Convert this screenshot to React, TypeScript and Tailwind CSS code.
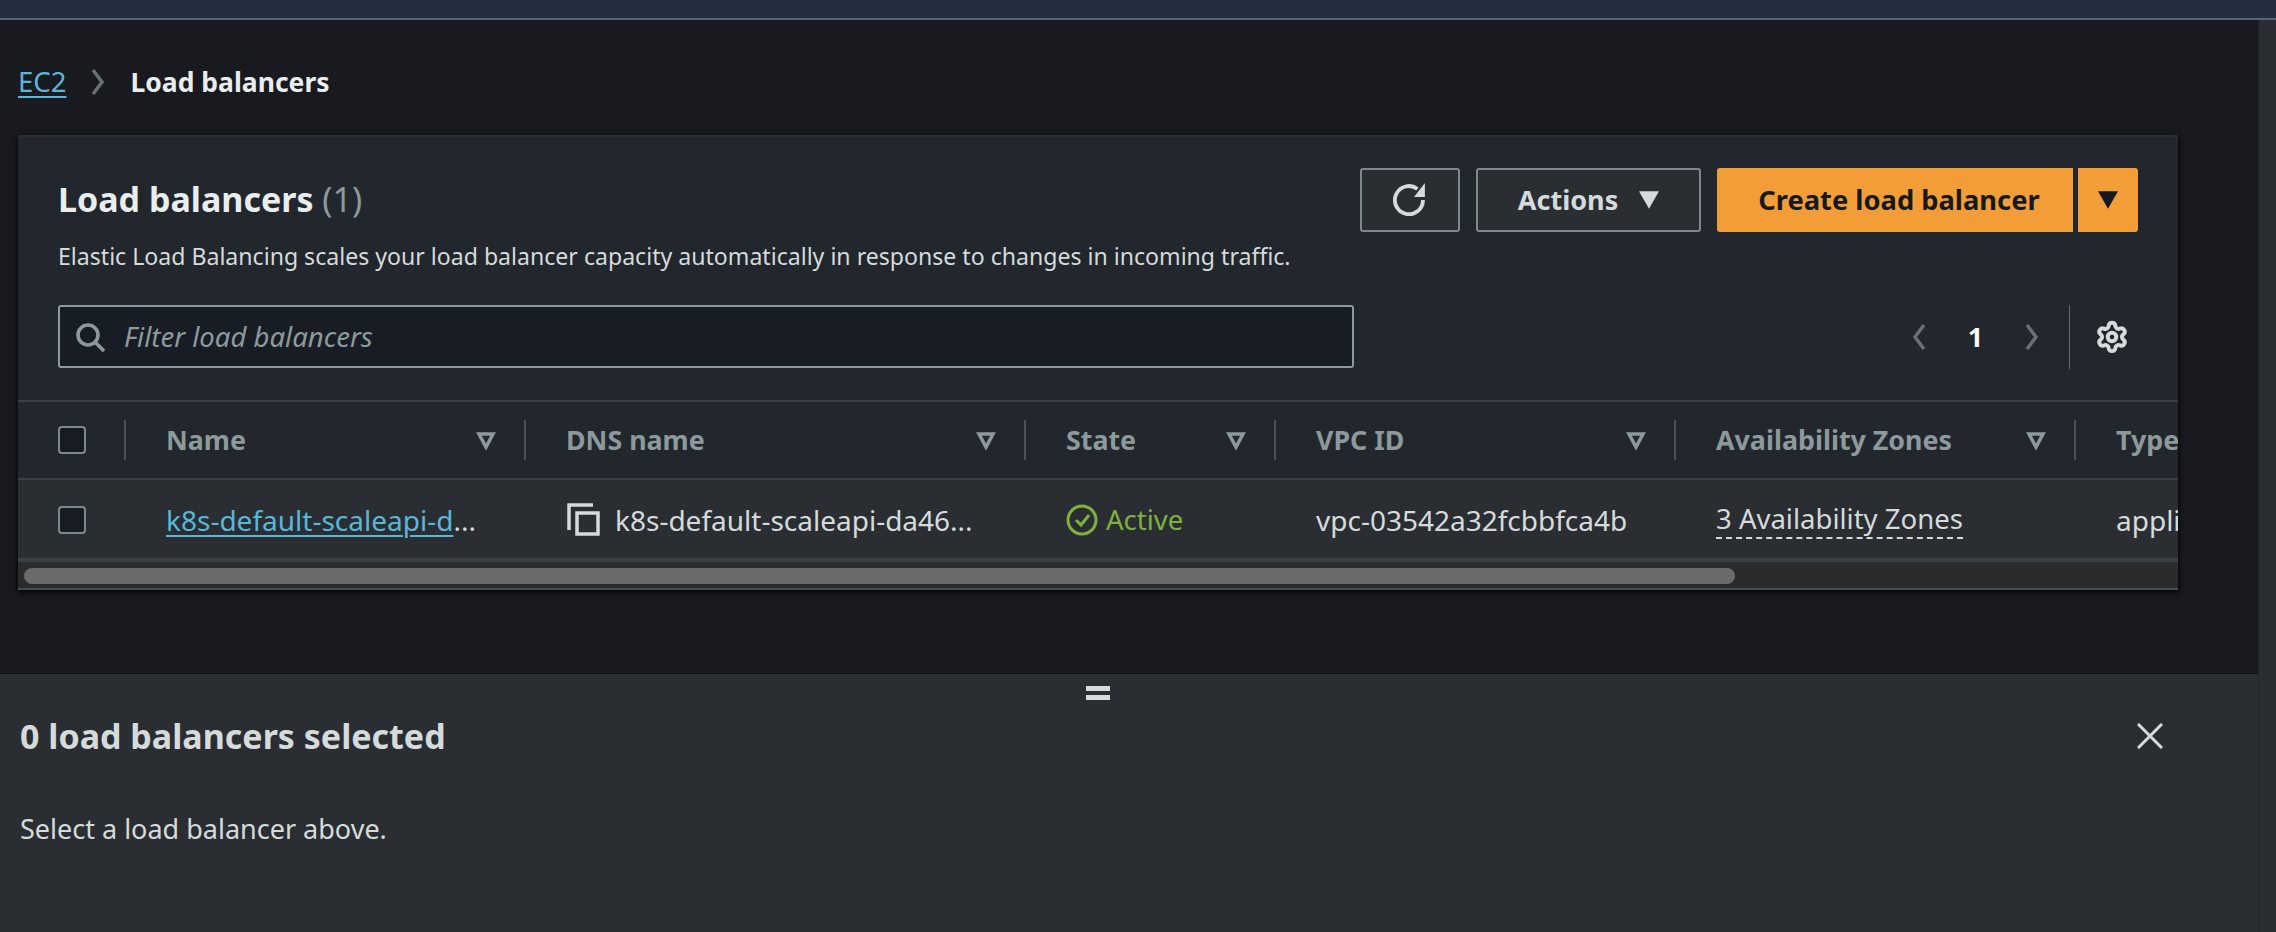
import { Settings } from "lucide-react";

const font = "font-['Noto_Sans',sans-serif]";

function SortIcon() {
  return (
    <svg viewBox="0 0 24 24" className="h-[24px] w-[24px] shrink-0 text-[#8d9a9b]" fill="none" stroke="currentColor" strokeWidth="3.5">
      <path d="M5 6h14l-7 13z" />
    </svg>
  );
}

function Caret({ color }: { color: string }) {
  return (
    <svg viewBox="0 0 16 16" className="h-[20px] w-[20px] shrink-0" fill={color}>
      <path d="M0 1h16L8 15z" />
    </svg>
  );
}

function Chevron({ left }: { left?: boolean }) {
  return (
    <svg viewBox="0 0 16 26" className="h-[26px] w-[16px] shrink-0 text-[#687078]" fill="none" stroke="currentColor" strokeWidth="3.5">
      <path d={left ? "M13 1 4 13l9 12" : "M3 1l9 12-9 12"} />
    </svg>
  );
}

function Checkbox() {
  return <div className="h-[28px] w-[28px] shrink-0 rounded-[4px] border-2 border-[#7d8a8b] bg-[#181c24]" />;
}

const columns = [
  { label: "Name", width: "w-[400px]" },
  { label: "DNS name", width: "w-[500px]" },
  { label: "State", width: "w-[250px]" },
  { label: "VPC ID", width: "w-[400px]" },
  { label: "Availability Zones", width: "w-[400px]" },
];

export default function App() {
  return (
    <div className={`flex h-[932px] w-[2276px] flex-col overflow-hidden bg-[#181a1f] ${font}`}>
      {/* Console top bar */}
      <div className="h-[20px] shrink-0 border-b-2 border-[#59646b] bg-[#232f3e]" />

      <div className="flex min-h-0 flex-1">
        <div className="flex w-[2258px] flex-col">
          <div className="h-[653px] shrink-0 pl-[18px]">
            {/* Breadcrumb */}
            <div className="flex h-[115px] items-center pt-[8px] leading-[30px]">
              <a className="text-[27.5px] text-[#5bb6d8] underline decoration-2 underline-offset-4">EC2</a>
              <span className="ml-[24px] mr-[24px]">
                <Chevron />
              </span>
              <span className="text-[26.5px] font-bold text-[#eaeded]">Load balancers</span>
            </div>

            {/* Table card */}
            <div className="w-[2160px] overflow-hidden border-t-2 border-[#2a2e33] bg-[#22262d] shadow-[0_2px_6px_#000]">
              <div className="flex h-[265px] flex-col border-b-2 border-[#3a3f48] px-[40px] pt-[31px]">
                <div className="flex justify-between">
                  <div className="pt-[11px]">
                    <h1 className="text-[34px] font-bold leading-[40px] text-[#eaeded]">
                      Load balancers <span className="font-normal text-[#8d9a9b]">(1)</span>
                    </h1>
                    <p className="mt-[22px] text-[23.1px] leading-[30px] text-[#d5dbdb]">
                      Elastic Load Balancing scales your load balancer capacity automatically in response to changes in incoming traffic.
                    </p>
                  </div>
                  <div className="flex h-[64px] gap-[16px]">
                    <button className="flex w-[100px] items-center justify-center rounded-[3px] border-2 border-[#7d8a8b] bg-[#2a2e33] text-[#d5dbdb]">
                      <svg viewBox="0 0 16 16" className="h-[34px] w-[34px]" fill="none" stroke="currentColor" strokeWidth="1.8">
                        <path d="M11.5 2.8A6.6 6.6 0 1 0 14.1 8" />
                        <path d="M15 0v6.6H9.9z" fill="currentColor" stroke="none" />
                      </svg>
                    </button>
                    <button className="flex w-[225px] items-center justify-center gap-[21px] rounded-[3px] border-2 border-[#7d8a8b] bg-[#2a2e33] text-[27px] font-bold text-[#d5dbdb]">
                      Actions <Caret color="#d5dbdb" />
                    </button>
                    <div className="flex gap-[5px]">
                      <button className="w-[356px] rounded-l-[3px] bg-[#f29d38] pl-[8px] text-[27.3px] font-bold text-[#16191f]">
                        Create load balancer
                      </button>
                      <button className="flex w-[60px] items-center justify-center rounded-r-[3px] bg-[#f29d38]">
                        <Caret color="#16191f" />
                      </button>
                    </div>
                  </div>
                </div>

                {/* Filter and pagination */}
                <div className="mt-[34px] flex h-[64px] items-start justify-between">
                  <div className="flex h-[63px] w-[1296px] items-center gap-[18px] rounded-[3px] border-2 border-[#8d9a9b] bg-[#181c24] pl-[14px] text-[#8d9a9b]">
                    <svg viewBox="0 0 16 16" className="h-[32px] w-[32px] shrink-0" fill="none" stroke="currentColor" strokeWidth="1.8">
                      <circle cx="7" cy="7" r="5" />
                      <path d="m10.7 10.7 4.3 4.3" />
                    </svg>
                    <span className="text-[27.5px] italic">Filter load balancers</span>
                  </div>
                  <div className="flex h-[64px] items-center pr-[9px]">
                    <Chevron left />
                    <span className="mx-[40px] w-[17px] text-center text-[27px] font-bold text-[#fafafa]">1</span>
                    <Chevron />
                    <div className="ml-[29px] h-[64px] w-px bg-[#5f6b7a]" />
                    <Settings className="ml-[25px] h-[34px] w-[34px] text-[#d5dbdb]" strokeWidth={2.8} />
                  </div>
                </div>
              </div>

              {/* Table header */}
              <div className="flex h-[78px] items-center border-b-2 border-[#3a3f48]">
                <div className="flex h-[40px] w-[108px] shrink-0 items-center border-r-2 border-[#4a5058] pl-[40px]">
                  <Checkbox />
                </div>
                {columns.map((col) => (
                  <div key={col.label} className={`flex h-[40px] shrink-0 items-center justify-between border-r-2 border-[#4a5058] pl-[40px] pr-[26px] ${col.width}`}>
                    <span className="text-[26.8px] font-bold text-[#8d9a9b]">{col.label}</span>
                    <SortIcon />
                  </div>
                ))}
                <span className="pl-[40px] text-[26.8px] font-bold text-[#8d9a9b]">Type</span>
              </div>

              {/* Table row */}
              <div className="flex h-[82px] items-center border-b-4 border-[#3a3f48] bg-[#2a2e33] text-[28px] text-[#d5dbdb]">
                <div className="flex w-[107px] shrink-0 pl-[40px] pt-[2px]">
                  <Checkbox />
                </div>
                <div className="flex w-[400px] shrink-0 pl-[41px] pt-[2px]">
                  <a className="text-[#5bb6d8] underline decoration-2 underline-offset-4">k8s-default-scaleapi-d</a>
                  <span>...</span>
                </div>
                <div className="flex w-[500px] shrink-0 items-center gap-[15px] pl-[42px]">
                  <svg viewBox="0 0 33 33" className="h-[33px] w-[33px] shrink-0" fill="none" stroke="currentColor" strokeWidth="3.5">
                    <path d="M2 27V2h24" />
                    <path d="M10 10h21v21H10z" />
                  </svg>
                  <span className="pt-[2px]">k8s-default-scaleapi-da46...</span>
                </div>
                <div className="flex w-[250px] shrink-0 items-center gap-[8px] pl-[41px] pt-[2px] text-[27.5px] text-[#7cb13f]">
                  <svg viewBox="0 0 32 32" className="h-[32px] w-[32px] shrink-0" fill="none" stroke="currentColor" strokeWidth="3">
                    <circle cx="16" cy="16" r="14" />
                    <path d="m10 16 5 5 8-10" />
                  </svg>
                  Active
                </div>
                <div className="w-[400px] shrink-0 pl-[41px] pt-[2px]">vpc-03542a32fcbbfca4b</div>
                <div className="w-[400px] shrink-0 pl-[41px] text-[27.5px]">
                  <span className="border-b-2 border-dashed border-[#d5dbdb]">3 Availability Zones</span>
                </div>
                <div className="pl-[41px] pt-[2px]">application</div>
              </div>

              {/* Horizontal scrollbar */}
              <div className="h-[28px] border-b-2 border-[#4a4d50] bg-[#2b2b2b] px-[6px] pt-[6px]">
                <div className="h-[16px] w-[1711px] rounded-full bg-[#6b6b6b]" />
              </div>
            </div>
          </div>

          {/* Split panel */}
          <div className="h-[259px] border-t border-[#0f1115] bg-[#2a2e33] pl-[20px] text-[#d5dbdb]">
            <div className="ml-[1066px] flex w-[24px] flex-col gap-[4px] pt-[12px]">
              <div className="h-[5px] bg-[#d5dbdb]" />
              <div className="h-[5px] bg-[#d5dbdb]" />
            </div>
            <div className="mt-[16px] flex items-center justify-between pr-[95px]">
              <h2 className="text-[34px] font-bold leading-[40px]">0 load balancers selected</h2>
              <svg viewBox="0 0 26 26" className="h-[26px] w-[26px]" fill="none" stroke="currentColor" strokeWidth="3">
                <path d="m1 1 24 24M25 1 1 25" />
              </svg>
            </div>
            <p className="mt-[58px] text-[27px] leading-[30px]">Select a load balancer above.</p>
          </div>
        </div>

        {/* Page scrollbar */}
        <div className="w-[18px] shrink-0 border-l border-[#1f2226] bg-[#2a2e33]" />
      </div>
    </div>
  );
}
